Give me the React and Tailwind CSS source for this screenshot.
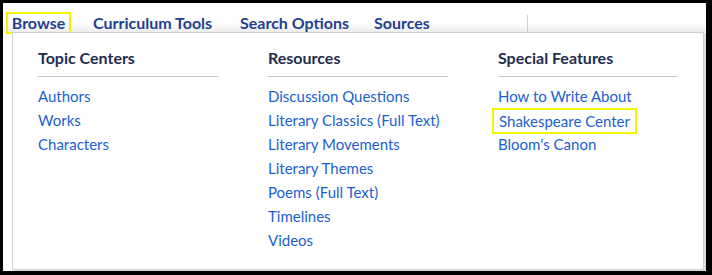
import React from "react";

const cols = [
  { title: "Topic Centers", links: ["Authors", "Works", "Characters"] },
  {
    title: "Resources",
    links: [
      "Discussion Questions",
      "Literary Classics (Full Text)",
      "Literary Movements",
      "Literary Themes",
      "Poems (Full Text)",
      "Timelines",
      "Videos",
    ],
  },
  { title: "Special Features", links: ["How to Write About", "Shakespeare Center", "Bloom's Canon"] },
];

export default function App() {
  return (
    <div
      className="w-[712px] h-[275px] bg-black pt-[3px] pl-[3px] pr-[6px] pb-[4px]"
      style={{ fontFamily: "Lato, 'Noto Sans', sans-serif" }}
    >
      <div className="w-full h-full bg-white flex flex-col">
        <div className="h-[29px] shrink-0 flex items-start bg-gradient-to-b from-white from-70% to-[#ececec]">
          <div className="flex items-start text-[16px] font-bold text-[#1f3f91]">
            <span className="ml-[3px] mt-[9px] w-[65px] h-[22px] border-2 border-[#f4f400] flex items-center justify-center leading-none">
              Browse
            </span>
            <span className="ml-[22px] mt-[9px] w-[147px] h-[22px] flex items-center leading-none">Curriculum Tools</span>
            <span className="mt-[9px] w-[134px] h-[22px] flex items-center leading-none">Search Options</span>
            <span className="mt-[9px] w-[153px] h-[22px] flex items-center leading-none">Sources</span>
            <span className="mt-[12px] w-px h-[17px] bg-[#d0d0d0]"></span>
          </div>
        </div>
        <div className="ml-[9px] w-[692px] flex-1 border border-[#cfcfcf] bg-white shadow-[2px_1px_1px_rgba(0,0,0,0.12)] mb-[1px] flex pl-[25px] pt-[15px] gap-[50px]">
          {cols.map((c) => (
            <div key={c.title} className="w-[180px]">
              <div className="text-[16px] font-bold text-[#1f2d4e] leading-[20px] pb-[8px] border-b border-[#c8c8c8]">
                {c.title}
              </div>
              <ul className="pt-[7px]">
                {c.links.map((l) => (
                  <li key={l} className="h-[24px] leading-[24px] text-[15px] text-[#1b5fd3]">
                    {l === "Shakespeare Center" ? (
                      <span className="-ml-[6px] inline-block h-[26px] leading-[22px] px-[5px] border-2 border-[#f4f400]">
                        {l}
                      </span>
                    ) : (
                      l
                    )}
                  </li>
                ))}
              </ul>
            </div>
          ))}
        </div>
      </div>
    </div>
  );
}
